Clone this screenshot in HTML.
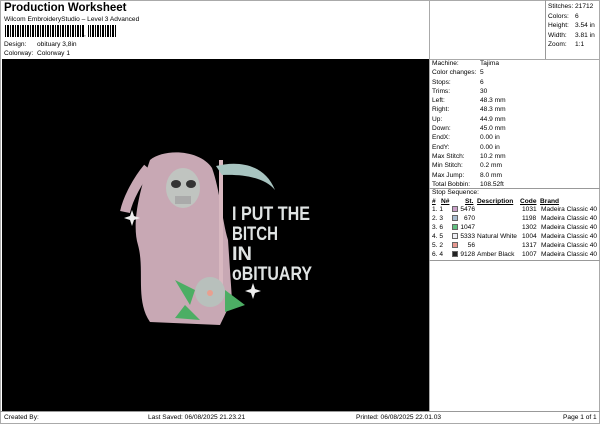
<!DOCTYPE html>
<html><head><style>
*{margin:0;padding:0;box-sizing:border-box}
body{width:600px;height:424px;background:#fff;font-family:"Liberation Sans",Arial,sans-serif;font-size:6.6px;color:#000;position:relative;overflow:hidden}
.a{position:absolute;white-space:nowrap;line-height:9px}
.b{position:absolute;border:1px solid #999}
</style></head><body>
<div class="b" style="left:0;top:0;width:600px;height:424px;border-color:#aaa"></div>
<div class="a" style="left:4px;top:2px;font-size:11.5px;font-weight:bold;line-height:13px">Production Worksheet</div>
<div class="a" style="left:4px;top:15px">Wilcom EmbroideryStudio – Level 3 Advanced</div>
<div style="position:absolute;left:5px;top:25px;width:112px;height:12px;background:repeating-linear-gradient(90deg,#000 0 1px,#fff 1px 2px,#000 2px 4px,#fff 4px 5px)"></div>
<div style="position:absolute;left:84px;top:25px;width:4px;height:12px;background:#fff"></div>
<div class="a" style="left:84px;top:30px">,</div>
<div class="a" style="left:4px;top:40px">Design:</div><div class="a" style="left:37px;top:40px">obituary 3,8in</div>
<div class="a" style="left:4px;top:49px">Colorway:</div><div class="a" style="left:37px;top:49px">Colorway 1</div>
<div style="position:absolute;left:2px;top:59px;width:427px;height:352px;background:#000"></div>
<div class="b" style="left:429px;top:0;width:171px;height:60px;border-color:#aaa"></div>
<div style="position:absolute;left:545px;top:0;width:1px;height:60px;background:#999"></div>
<div class="a" style="left:548px;top:2px;line-height:9.6px">Stitches:<br>Colors:<br>Height:<br>Width:<br>Zoom:</div>
<div class="a" style="left:575px;top:2px;line-height:9.6px">21712<br>6<br>3.54 in<br>3.81 in<br>1:1</div>
<div class="b" style="left:429px;top:59px;width:171px;height:353px;border-color:#aaa"></div>
<div style="position:absolute;left:429px;top:188px;width:171px;height:1px;background:#999"></div>
<div style="position:absolute;left:429px;top:260px;width:171px;height:1px;background:#999"></div>
<div class="a" style="left:432px;top:59px;line-height:9.3px">Machine:<br>Color changes:<br>Stops:<br>Trims:<br>Left:<br>Right:<br>Up:<br>Down:<br>EndX:<br>EndY:<br>Max Stitch:<br>Min Stitch:<br>Max Jump:<br>Total Bobbin:</div>
<div class="a" style="left:480px;top:59px;line-height:9.3px">Tajima<br>5<br>6<br>30<br>48.3 mm<br>48.3 mm<br>44.9 mm<br>45.0 mm<br>0.00 in<br>0.00 in<br>10.2 mm<br>0.2 mm<br>8.0 mm<br>108.52ft</div>
<div class="a" style="left:432px;top:188px">Stop Sequence:</div>
<div class="a" style="left:432px;top:197px;font-weight:bold;text-decoration:underline">#</div>
<div class="a" style="left:441px;top:197px;font-weight:bold;text-decoration:underline">N#</div>
<div class="a" style="left:465px;top:197px;font-weight:bold;text-decoration:underline">St.</div>
<div class="a" style="left:477px;top:197px;font-weight:bold;text-decoration:underline">Description</div>
<div class="a" style="left:520px;top:197px;font-weight:bold;text-decoration:underline">Code</div>
<div class="a" style="left:540px;top:197px;font-weight:bold;text-decoration:underline">Brand</div>
<div class="a" style="left:432px;top:205px;line-height:9.1px">1. 1<br>2. 3<br>3. 6<br>4. 5<br>5. 2<br>6. 4</div>
<div style="position:absolute;left:452px;top:206px;width:6px;height:6px;background:#c9a0c8;border:1px solid #666"></div>
<div style="position:absolute;left:452px;top:215px;width:6px;height:6px;background:#a8bcd0;border:1px solid #666"></div>
<div style="position:absolute;left:452px;top:224px;width:6px;height:6px;background:#60c080;border:1px solid #666"></div>
<div style="position:absolute;left:452px;top:233px;width:6px;height:6px;background:#eeeef4;border:1px solid #666"></div>
<div style="position:absolute;left:452px;top:242px;width:6px;height:6px;background:#e89890;border:1px solid #666"></div>
<div style="position:absolute;left:452px;top:251px;width:6px;height:6px;background:#222;border:1px solid #666"></div>
<div class="a" style="left:458px;top:205px;line-height:9.1px;text-align:right;width:17px">5476<br>670<br>1047<br>5333<br>56<br>9128</div>
<div class="a" style="left:477px;top:205px;line-height:9.1px"><br><br><br>Natural White<br><br>Amber Black</div>
<div class="a" style="left:522px;top:205px;line-height:9.1px">1031<br>1198<br>1302<br>1004<br>1317<br>1007</div>
<div class="a" style="left:541px;top:205px;line-height:9.1px">Madeira Classic 40<br>Madeira Classic 40<br>Madeira Classic 40<br>Madeira Classic 40<br>Madeira Classic 40<br>Madeira Classic 40</div>
<div style="position:absolute;left:0;top:411px;width:600px;height:1px;background:#999"></div>
<div class="a" style="left:4px;top:413px">Created By:</div>
<div class="a" style="left:148px;top:413px">Last Saved: 06/08/2025 21.23.21</div>
<div class="a" style="left:356px;top:413px">Printed: 06/08/2025 22.01.03</div>
<div class="a" style="left:563px;top:413px">Page 1 of 1</div>
<svg style="position:absolute;left:0;top:0" width="600" height="424">
<path d="M150 160 C165 148 200 150 212 168 C220 190 222 220 228 240 L232 300 L220 325 L150 322 C135 300 145 270 138 245 C132 225 138 195 150 160Z" fill="#c8a8b4"/>
<path d="M148 168 C138 180 128 198 125 212" stroke="#c8a8b4" stroke-width="10" fill="none"/>
<ellipse cx="183" cy="188" rx="17" ry="20" fill="#c0c4c0"/>
<ellipse cx="176" cy="184" rx="5" ry="4" fill="#333"/><ellipse cx="191" cy="184" rx="5" ry="4" fill="#333"/>
<rect x="175" y="196" width="16" height="8" fill="#aaa"/>
<rect x="219" y="160" width="4" height="128" fill="#d8b8c0"/>
<path d="M216 166 C240 160 265 165 275 190 C265 178 245 174 222 175Z" fill="#a8c4c0"/>
<g fill="#e0e4e4" font-family="Liberation Sans,sans-serif" font-size="19" font-weight="bold">
<text x="232" y="220" textLength="78" lengthAdjust="spacingAndGlyphs">I PUT THE</text>
<text x="232" y="240" textLength="46" lengthAdjust="spacingAndGlyphs">BITCH</text>
<text x="232" y="260" textLength="20" lengthAdjust="spacingAndGlyphs">IN</text>
<text x="232" y="280" textLength="80" lengthAdjust="spacingAndGlyphs">oBITUARY</text>
</g>
<path d="M175 280 L195 290 L190 305 Z M225 290 L245 305 L225 312Z M185 305 L200 320 L175 318Z" fill="#4cae64"/>
<circle cx="210" cy="292" r="15" fill="#b8c0bc"/><circle cx="210" cy="293" r="3" fill="#e8a090"/>
<path d="M132 210 l2 6 6 2 -6 2 -2 6 -2 -6 -6 -2 6 -2z M253 283 l2 6 6 2 -6 2 -2 6 -2 -6 -6 -2 6 -2z" fill="#eee"/>
</svg>
</body></html>
